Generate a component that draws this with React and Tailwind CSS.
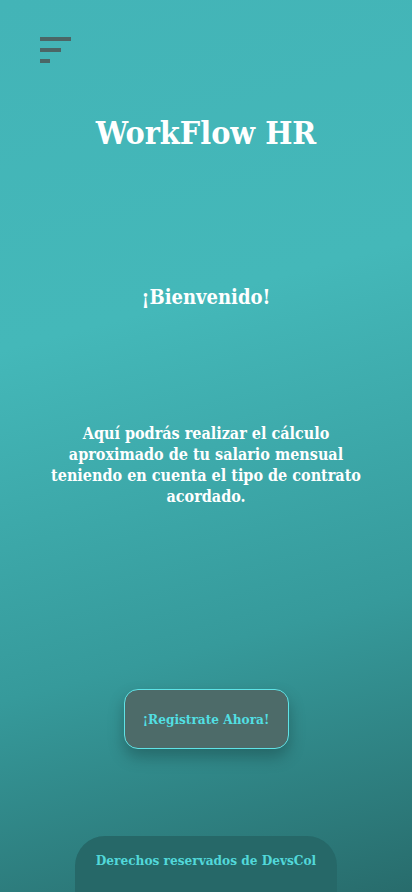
export default function App() {
  const serif = { fontFamily: '"DejaVu Serif Condensed", "DejaVu Serif", serif' };
  return (
    <div
      className="relative w-[412px] h-[892px] overflow-hidden flex flex-col items-center bg-[linear-gradient(165deg,#43b4b7_0%,#44b8b9_35%,#369a9b_70%,#286c6c_100%)] font-stretch-condensed"
      style={serif}
    >
      <div className="w-full pl-10 pt-[37px]">
        <div className="flex flex-col gap-[7px]">
          <div className="w-[31px] h-[4px] bg-[#4b6666]" />
          <div className="w-[21px] h-[4px] bg-[#4b6666]" />
          <div className="w-[10px] h-[4px] bg-[#4b6666]" />
        </div>
      </div>
      <h1 className="mt-[48px] text-[32px] leading-[44px] font-bold text-white">WorkFlow HR</h1>
      <h2 className="mt-[128px] text-[20px] leading-[28px] font-bold text-white">¡Bienvenido!</h2>
      <p className="mt-[112px] text-[16px] leading-[21px] font-bold text-white text-center">
        Aquí podrás realizar el cálculo
        <br />
        aproximado de tu salario mensual
        <br />
        teniendo en cuenta el tipo de contrato
        <br />
        acordado.
      </p>
      <button className="mt-[182px] w-[165px] h-[60px] rounded-[14px] border border-[#5fe3e6] bg-[#4d6b69] text-[#52dfe2] text-[13.5px] font-bold shadow-[0_8px_16px_rgba(0,0,0,0.25)]">
        ¡Registrate Ahora!
      </button>
      <div className="mt-auto w-[262px] h-[56px] rounded-t-[30px] bg-[#266868] flex justify-center pt-[15px]">
        <span className="text-[13.5px] leading-[18px] font-bold text-[#52d8da]">Derechos reservados de DevsCol</span>
      </div>
    </div>
  );
}
